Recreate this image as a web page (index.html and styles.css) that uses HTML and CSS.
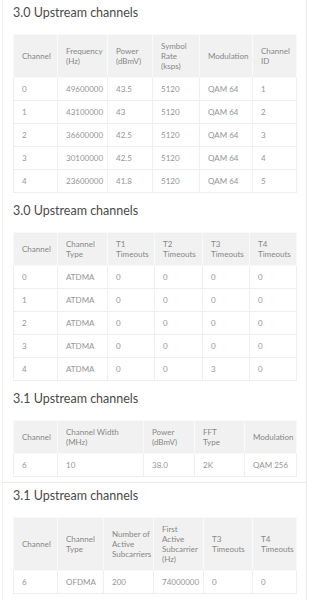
FILE: index.html
```html
<!DOCTYPE html>
<html>
<head>
<meta charset="utf-8">
<link rel="stylesheet" href="styles.css">
</head>
<body>
<div class="page">
  <section class="card">
    <h2 class="title">3.0 Upstream channels</h2>
    <table class="grid">
      <colgroup><col style="width:44px"><col style="width:50px"><col style="width:45px"><col style="width:47px"><col style="width:53px"><col style="width:44px"></colgroup>
      <thead><tr><th>Channel</th><th>Frequency<br>(Hz)</th><th>Power<br>(dBmV)</th><th>Symbol<br>Rate<br>(ksps)</th><th>Modulation</th><th>Channel<br>ID</th></tr></thead>
      <tbody>
        <tr><td>0</td><td>49600000</td><td>43.5</td><td>5120</td><td>QAM 64</td><td>1</td></tr>
        <tr><td>1</td><td>43100000</td><td>43</td><td>5120</td><td>QAM 64</td><td>2</td></tr>
        <tr><td>2</td><td>36600000</td><td>42.5</td><td>5120</td><td>QAM 64</td><td>3</td></tr>
        <tr><td>3</td><td>30100000</td><td>42.5</td><td>5120</td><td>QAM 64</td><td>4</td></tr>
        <tr><td>4</td><td>23600000</td><td>41.8</td><td>5120</td><td>QAM 64</td><td>5</td></tr>
      </tbody>
    </table>
  </section>
  <section class="card">
    <h2 class="title">3.0 Upstream channels</h2>
    <table class="grid">
      <colgroup><col style="width:44px"><col style="width:50px"><col style="width:47px"><col style="width:48px"><col style="width:47px"><col style="width:47px"></colgroup>
      <thead><tr><th>Channel</th><th>Channel<br>Type</th><th>T1<br>Timeouts</th><th>T2<br>Timeouts</th><th>T3<br>Timeouts</th><th>T4<br>Timeouts</th></tr></thead>
      <tbody>
        <tr><td>0</td><td>ATDMA</td><td>0</td><td>0</td><td>0</td><td>0</td></tr>
        <tr><td>1</td><td>ATDMA</td><td>0</td><td>0</td><td>0</td><td>0</td></tr>
        <tr><td>2</td><td>ATDMA</td><td>0</td><td>0</td><td>0</td><td>0</td></tr>
        <tr><td>3</td><td>ATDMA</td><td>0</td><td>0</td><td>0</td><td>0</td></tr>
        <tr><td>4</td><td>ATDMA</td><td>0</td><td>0</td><td>3</td><td>0</td></tr>
      </tbody>
    </table>
  </section>
  <section class="card card-closed">
    <h2 class="title">3.1 Upstream channels</h2>
    <table class="grid">
      <colgroup><col style="width:44px"><col style="width:86px"><col style="width:51px"><col style="width:50px"><col style="width:52px"></colgroup>
      <thead><tr><th>Channel</th><th>Channel Width<br>(MHz)</th><th>Power<br>(dBmV)</th><th>FFT<br>Type</th><th>Modulation</th></tr></thead>
      <tbody>
        <tr><td>6</td><td>10</td><td>38.0</td><td>2K</td><td>QAM 256</td></tr>
      </tbody>
    </table>
  </section>
  <section class="card card-closed card-last">
    <h2 class="title">3.1 Upstream channels</h2>
    <table class="grid">
      <colgroup><col style="width:44px"><col style="width:46px"><col style="width:50px"><col style="width:50px"><col style="width:49px"><col style="width:44px"></colgroup>
      <thead><tr><th>Channel</th><th>Channel<br>Type</th><th>Number of<br>Active<br>Subcarriers</th><th>First<br>Active<br>Subcarrier<br>(Hz)</th><th>T3<br>Timeouts</th><th>T4<br>Timeouts</th></tr></thead>
      <tbody>
        <tr><td>6</td><td>OFDMA</td><td>200</td><td>74000000</td><td>0</td><td>0</td></tr>
      </tbody>
    </table>
  </section>
</div>
</body>
</html>
```

FILE: styles.css
```css
* { box-sizing: border-box; }
html, body { margin: 0; padding: 0; background: #ffffff; }
body { font-family: Lato, "Open Sans", sans-serif; color: #333; }
.page { width: 307px; padding-left: 2px; }
.card {
  border-left: 1px solid #f0f0f0;
  border-right: 1px solid #ebebeb;
  padding: 5px 9px 5px 10px;
}
.card-closed { border-bottom: 1px solid #ebebeb; }
.card-last { padding-bottom: 9px; }
.title {
  margin: 0;
  font-size: 12.5px;
  line-height: 16px;
  font-weight: 400;
  color: #4a4a4a;
}
.grid {
  margin-top: 13px;
  width: 283px;
  table-layout: fixed;
  border-collapse: collapse;
  font-size: 8px;
  line-height: 10px;
  color: #959595;
}
.grid th, .grid td {
  text-align: left;
  vertical-align: middle;
  padding: 6px 8px;
  white-space: nowrap;
}
.grid th {
  background: #f1f1f1;
  font-weight: 400;
  color: #878787;
  border: 1px solid #f9f9f9;
}
.grid td {
  border: 1px solid #eeeeee;
  height: 22px;
}
```
